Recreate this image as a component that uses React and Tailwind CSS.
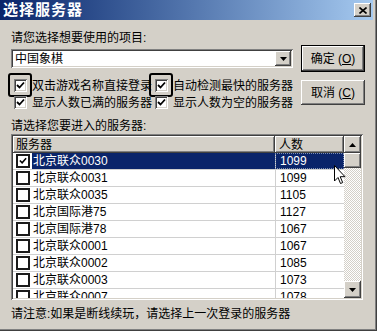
import React from 'react';

const rows = [
  { name: '北京联众0030', count: '1099', checked: true, selected: true },
  { name: '北京联众0031', count: '1099' },
  { name: '北京联众0035', count: '1105' },
  { name: '北京国际港75', count: '1127' },
  { name: '北京国际港78', count: '1067' },
  { name: '北京联众0001', count: '1067' },
  { name: '北京联众0002', count: '1085' },
  { name: '北京联众0003', count: '1073' },
  { name: '北京联众0007', count: '1078' },
];

function Check({ className = '' }) {
  return (
    <svg viewBox="0 0 9 9" className={className}>
      <path d="M1 4 L3.5 6.5 L8 1.5" fill="none" stroke="#000" strokeWidth="1.8" />
    </svg>
  );
}

function Checkbox({ checked, ring }) {
  return (
    <span className="relative shrink-0 w-[13px] h-[13px] bg-white flex items-center justify-center shadow-[inset_1px_1px_#808080,inset_-1px_-1px_#ffffff,inset_2px_2px_#404040,inset_-2px_-2px_#d4d0c8]">
      {checked && <Check className="w-[9px] h-[9px]" />}
      {ring && <span className="absolute left-[-6px] top-[-6px] w-[24px] h-[24px] border-2 border-black rounded-[3px]" />}
    </span>
  );
}

function Option({ label, ring, wide }) {
  return (
    <div className={`flex items-center gap-[5px] ${wide ? 'w-[142px]' : ''}`}>
      <Checkbox checked ring={ring} />
      <span className="whitespace-nowrap">{label}</span>
    </div>
  );
}

function Arrow({ up }) {
  return (
    <svg viewBox="0 0 7 4" className="w-[7px] h-[4px]">
      <path d={up ? 'M0 4 L3.5 0 L7 4 Z' : 'M0 0 L7 0 L3.5 4 Z'} fill="#000" />
    </svg>
  );
}

export default function App() {
  return (
    <div className="relative w-[377px] h-[331px] bg-[#d4d0c8] flex flex-col pr-[4px] pb-[4px] text-[12px] leading-[14px] text-black font-['Liberation_Sans','Noto_Sans_CJK_SC',sans-serif] shadow-[inset_-1px_-1px_#404040,inset_-2px_-2px_#808080]">
      {/* title bar */}
      <div className="h-[20px] flex items-center justify-between pl-[3px] pr-[2px] bg-linear-to-r from-[#0a246a] to-[#a6caf0]">
        <span className="text-white font-bold text-[15px] tracking-[1px] leading-[20px]">选择服务器</span>
        <span className="w-[17px] h-[14px] bg-[#d4d0c8] flex items-center justify-center shadow-[inset_-1px_-1px_#404040,inset_1px_1px_#ffffff,inset_-2px_-2px_#808080,inset_2px_2px_#d4d0c8]">
          <svg viewBox="0 0 8 7" className="w-[8px] h-[7px]">
            <path d="M0.5 0.5 L7.5 6.5 M7.5 0.5 L0.5 6.5" stroke="#000" strokeWidth="1.6" />
          </svg>
        </span>
      </div>

      <div className="flex-1 flex flex-col pl-[11px] pr-[8px]">
        <div className="flex">
          <div className="w-[282px] flex flex-col">
            <div className="mt-[11px]">请您选择想要使用的项目:</div>
            <div className="mt-[4px] h-[19px] bg-white flex items-center shadow-[inset_1px_1px_#808080,inset_-1px_-1px_#ffffff,inset_2px_2px_#404040,inset_-2px_-2px_#d4d0c8]">
              <span className="flex-1 pl-[4px]">中国象棋</span>
              <span className="w-[16px] h-[15px] mr-[2px] bg-[#d4d0c8] flex items-center justify-center shadow-[inset_-1px_-1px_#404040,inset_1px_1px_#ffffff,inset_-2px_-2px_#808080,inset_2px_2px_#d4d0c8]">
                <Arrow />
              </span>
            </div>
            <div className="mt-[9px] h-[17px] flex items-center pl-[3px]">
              <Option label="双击游戏名称直接登录" ring wide />
              <Option label="自动检测最快的服务器" ring />
            </div>
            <div className="h-[17px] flex items-center pl-[3px]">
              <Option label="显示人数已满的服务器" wide />
              <Option label="显示人数为空的服务器" />
            </div>
          </div>
          <div className="ml-[8px] w-[64px] flex flex-col pt-[25px] gap-[8px]">
            <div className="h-[27px] border border-black bg-[#d4d0c8] flex items-center justify-center shadow-[inset_-1px_-1px_#404040,inset_1px_1px_#ffffff,inset_-2px_-2px_#808080,inset_2px_2px_#d4d0c8]">
              确定 (<span className="underline">O</span>)
            </div>
            <div className="h-[25px] bg-[#d4d0c8] flex items-center justify-center shadow-[inset_-1px_-1px_#404040,inset_1px_1px_#ffffff,inset_-2px_-2px_#808080,inset_2px_2px_#d4d0c8]">
              取消 (<span className="underline">C</span>)
            </div>
          </div>
        </div>

        <div className="mt-[8px]">请选择您要进入的服务器:</div>

        {/* server list */}
        <div className="mt-[1px] mr-[2px] h-[166px] bg-white p-[2px] flex overflow-hidden shadow-[inset_1px_1px_#808080,inset_-1px_-1px_#ffffff,inset_2px_2px_#404040,inset_-2px_-2px_#d4d0c8]">
          <div className="flex-1 flex flex-col overflow-hidden">
            <div className="h-[17px] shrink-0 flex">
              <div className="w-[262px] pl-[3px] flex items-center bg-[#d4d0c8] shadow-[inset_-1px_-1px_#404040,inset_1px_1px_#ffffff,inset_-2px_-2px_#808080]">服务器</div>
              <div className="flex-1 pl-[4px] flex items-center bg-[#d4d0c8] shadow-[inset_-1px_-1px_#404040,inset_1px_1px_#ffffff,inset_-2px_-2px_#808080]">人数</div>
            </div>
            {rows.map((r) => (
              <div key={r.name} className="h-[17px] shrink-0 flex border-b border-[#d0d0d0]">
                <div className="w-[262px] pl-[3px] flex items-center">
                  <span className="shrink-0 w-[14px] h-[14px] bg-white border-2 border-[#1a1a1a] flex items-center justify-center">
                    {r.checked && <Check className="w-[8px] h-[8px]" />}
                  </span>
                  <span className={`ml-[2px] flex-1 h-full flex items-center pl-[1px] ${r.selected ? 'bg-[#0a246a] text-white' : ''}`}>{r.name}</span>
                </div>
                <div className={`flex-1 pl-[4px] flex items-center border-l border-[#d0d0d0] ${r.selected ? 'bg-[#0a246a] text-white outline-1 outline-dotted outline-[#8090b0] -outline-offset-1' : ''}`}>{r.count}</div>
              </div>
            ))}
          </div>
          <div className="w-[17px] flex flex-col">
            <div className="h-[17px] bg-[#d4d0c8] flex items-center justify-center shadow-[inset_-1px_-1px_#404040,inset_1px_1px_#ffffff,inset_-2px_-2px_#808080,inset_2px_2px_#d4d0c8]">
              <Arrow up />
            </div>
            <div className="h-[15px] bg-[#d4d0c8] shadow-[inset_-1px_-1px_#404040,inset_1px_1px_#ffffff,inset_-2px_-2px_#808080,inset_2px_2px_#d4d0c8]" />
            <div className="flex-1 bg-[repeating-conic-gradient(#ffffff_0%_25%,#d4d0c8_0%_50%)] bg-[length:2px_2px]" />
            <div className="h-[17px] bg-[#d4d0c8] flex items-center justify-center shadow-[inset_-1px_-1px_#404040,inset_1px_1px_#ffffff,inset_-2px_-2px_#808080,inset_2px_2px_#d4d0c8]">
              <Arrow />
            </div>
          </div>
        </div>

        <div className="flex-1 flex items-center">请注意:如果是断线续玩，请选择上一次登录的服务器</div>
      </div>

      {/* mouse pointer */}
      <svg viewBox="0 0 12 20" className="absolute left-[334px] top-[165px] w-[12px] h-[20px]">
        <path d="M0.5 0.5 L0.5 16 L4 12.5 L6.5 18.5 L8.7 17.6 L6.2 11.7 L11 11.7 Z" fill="#fff" stroke="#000" strokeWidth="1" />
      </svg>
    </div>
  );
}
